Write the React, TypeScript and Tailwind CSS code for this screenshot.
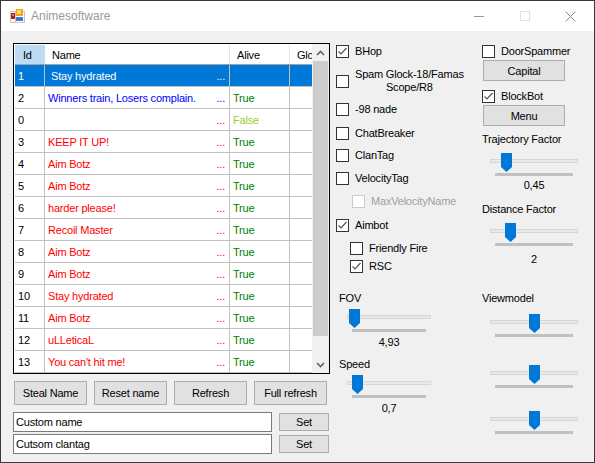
import React from 'react'

const rows = [
  { id: '1', name: 'Stay hydrated', alive: '', color: 'text-white', aliveColor: '', dots: 'text-white' },
  { id: '2', name: 'Winners train, Losers complain.', alive: 'True', color: 'text-[#0000ff]', aliveColor: 'text-[#008000]', dots: 'text-[#0000ff]' },
  { id: '0', name: '', alive: 'False', color: 'text-[#ff0000]', aliveColor: 'text-[#9acd32]', dots: 'text-[#ff0000]' },
  { id: '3', name: 'KEEP IT UP!', alive: 'True', color: 'text-[#ff0000]', aliveColor: 'text-[#008000]', dots: 'text-[#ff0000]' },
  { id: '4', name: 'Aim Botz', alive: 'True', color: 'text-[#ff0000]', aliveColor: 'text-[#008000]', dots: 'text-[#ff0000]' },
  { id: '5', name: 'Aim Botz', alive: 'True', color: 'text-[#ff0000]', aliveColor: 'text-[#008000]', dots: 'text-[#ff0000]' },
  { id: '6', name: 'harder please!', alive: 'True', color: 'text-[#ff0000]', aliveColor: 'text-[#008000]', dots: 'text-[#ff0000]' },
  { id: '7', name: 'Recoil Master', alive: 'True', color: 'text-[#ff0000]', aliveColor: 'text-[#008000]', dots: 'text-[#ff0000]' },
  { id: '8', name: 'Aim Botz', alive: 'True', color: 'text-[#ff0000]', aliveColor: 'text-[#008000]', dots: 'text-[#ff0000]' },
  { id: '9', name: 'Aim Botz', alive: 'True', color: 'text-[#ff0000]', aliveColor: 'text-[#008000]', dots: 'text-[#ff0000]' },
  { id: '10', name: 'Stay hydrated', alive: 'True', color: 'text-[#ff0000]', aliveColor: 'text-[#008000]', dots: 'text-[#ff0000]' },
  { id: '11', name: 'Aim Botz', alive: 'True', color: 'text-[#ff0000]', aliveColor: 'text-[#008000]', dots: 'text-[#ff0000]' },
  { id: '12', name: 'uLLeticaL', alive: 'True', color: 'text-[#ff0000]', aliveColor: 'text-[#008000]', dots: 'text-[#ff0000]' },
  { id: '13', name: "You can't hit me!", alive: 'True', color: 'text-[#ff0000]', aliveColor: 'text-[#008000]', dots: 'text-[#ff0000]' },
]

const AppIcon = () => (
  <svg width="16" height="16" viewBox="0 0 16 16" className="shrink-0">
    <path d="M0.5 3.5 H14.5 V14.5 H0.5 Z M5.5 3.5 V14.5" fill="#ffffff" stroke="#c4c4c4" strokeWidth="1" />
    <rect x="1" y="5" width="4" height="6" fill="#b81c1c" />
    <rect x="2" y="6" width="2" height="2" fill="#e87070" />
    <rect x="6" y="1" width="7" height="7" fill="#eaa818" />
    <rect x="7" y="2" width="4" height="4" fill="#ffd860" />
    <rect x="6" y="9" width="7" height="4" fill="#3c78d8" />
  </svg>
)

const Check = ({ label, checked, disabled, className = '' }: { label: React.ReactNode; checked?: boolean; disabled?: boolean; className?: string }) => (
  <div className={`flex items-center gap-[6px] whitespace-nowrap ${className}`}>
    <span className={`w-[13px] h-[13px] shrink-0 border bg-white flex items-center justify-center ${disabled ? 'border-[#cccccc]' : 'border-[#333333]'}`}>
      {checked && (
        <svg width="11" height="11" viewBox="0 0 11 11">
          <path d="M1.5 5.5 L4 8 L9.5 2" fill="none" stroke="#555555" strokeWidth="1.2" />
        </svg>
      )}
    </span>
    <span className={disabled ? 'text-[#a0a0a0]' : ''}>{label}</span>
  </div>
)

const Btn = ({ children, className = '' }: { children: React.ReactNode; className?: string }) => (
  <button className={`bg-[#e1e1e1] border border-[#adadad] flex items-center justify-center shrink-0 ${className}`}>{children}</button>
)

// thumb offset is measured from the left of the track
const Slider = ({ width, thumb, className = '' }: { width: number; thumb: number; className?: string }) => (
  <div className={`relative h-[24px] ${className}`} style={{ width }}>
    <div className="absolute left-0 right-0 top-[6px] h-[4px] bg-[#e7eae7] border border-[#d6d6d6]" />
    <svg width="11" height="19" viewBox="0 0 11 19" className="absolute top-0" style={{ left: thumb }}>
      <path d="M0 0 H11 V14 L5.5 19 L0 14 Z" fill="#0078d7" />
    </svg>
    <div className="absolute top-[20px] left-[5px] right-[5px] h-[3px] bg-[#c0c0c0]" />
  </div>
)

const App = () => (
  <div className="w-[595px] h-[463px] flex flex-col bg-[#f0f0f0] border border-[#3a3a3a] text-[11px] tracking-[-0.2px] text-[#000000] overflow-hidden font-['Liberation_Sans',sans-serif] leading-[16px]">
    <div className="h-[30px] shrink-0 bg-white flex items-center">
      <div className="flex items-center gap-[5px] pl-[9px] flex-1">
        <AppIcon />
        <span className="text-[#999999] text-[12px] tracking-normal">Animesoftware</span>
      </div>
      <div className="flex items-center text-[#999999]">
        <div className="w-[46px] flex justify-center"><div className="w-[10px] h-px bg-[#999999]" /></div>
        <div className="w-[46px] flex justify-center"><div className="w-[10px] h-[10px] border border-[#e0e0e0]" /></div>
        <div className="w-[46px] flex justify-center pr-[1px]">
          <svg width="11" height="11" viewBox="0 0 11 11"><path d="M0.5 0.5 L10.5 10.5 M10.5 0.5 L0.5 10.5" stroke="#888888" strokeWidth="1" /></svg>
        </div>
      </div>
    </div>

    <div className="flex flex-1">
      {/* grid + buttons */}
      <div className="w-[335px] shrink-0 pl-[12px] pt-[12px] flex flex-col">
        <div className="w-[317px] h-[331px] border border-black flex bg-white">
          <div className="flex-1 flex flex-col overflow-hidden pl-[1px] pt-[1px]">
            <div className="flex h-[20px] shrink-0 border-b border-[#a0a0a0]">
              <div className="w-[30px] bg-[#bcdcf4] pl-[8px] leading-[20px]">Id</div>
              <div className="w-[185px] pl-[7px] leading-[20px] border-r border-[#e5e5e5]">Name</div>
              <div className="w-[60px] pl-[7px] leading-[20px] border-r border-[#e5e5e5]">Alive</div>
              <div className="w-[22px] pl-[7px] leading-[20px] overflow-hidden whitespace-nowrap">Glow</div>
            </div>
            {rows.map((r, i) => (
              <div key={r.id} className={`flex h-[22px] shrink-0 border-b border-[#c0c0c0] leading-[23px] ${i === 0 ? 'bg-[#0078d7]' : ''}`}>
                <div className={`w-[30px] pl-[3px] border-r border-[#c0c0c0] ${i === 0 ? 'text-white' : ''}`}>{r.id}</div>
                <div className={`w-[185px] flex justify-between pr-[4px] border-r border-[#c0c0c0] whitespace-nowrap ${i === 0 ? 'pl-[6px]' : 'pl-[3px]'}`}>
                  <span className={r.color}>{r.name}</span>
                  <span className={r.dots}>...</span>
                </div>
                <div className={`w-[60px] pl-[3px] border-r border-[#c0c0c0] ${r.aliveColor}`}>{r.alive}</div>
                <div className="w-[22px]" />
              </div>
            ))}
          </div>
          <div className="w-[17px] shrink-0 bg-[#f0f0f0] flex flex-col">
            <div className="h-[17px] flex items-center justify-center">
              <svg width="9" height="6" viewBox="0 0 9 6"><path d="M1 5 L4.5 1.5 L8 5" fill="none" stroke="#606060" strokeWidth="1.6" /></svg>
            </div>
            <div className="h-[275px] mx-[1px] bg-[#cdcdcd]" />
            <div className="flex-1" />
            <div className="h-[17px] flex items-center justify-center">
              <svg width="9" height="6" viewBox="0 0 9 6"><path d="M1 1 L4.5 4.5 L8 1" fill="none" stroke="#606060" strokeWidth="1.6" /></svg>
            </div>
          </div>
        </div>

        <div className="flex gap-[7px] pl-[1px] mt-[7px]">
          <Btn className="w-[73px] h-[24px]">Steal Name</Btn>
          <Btn className="w-[73px] h-[24px]">Reset name</Btn>
          <Btn className="w-[73px] h-[24px]">Refresh</Btn>
          <Btn className="w-[73px] h-[24px]">Full refresh</Btn>
        </div>

        <div className="flex items-center gap-[7px] mt-[7px]">
          <div className="w-[259px] h-[20px] bg-white border border-[#7a7a7a] pl-[2px] leading-[18px]">Custom name</div>
          <Btn className="w-[50px] h-[18px]">Set</Btn>
        </div>
        <div className="flex items-center gap-[7px] mt-[2px]">
          <div className="w-[259px] h-[20px] bg-white border border-[#7a7a7a] pl-[2px] leading-[18px]">Cutsom clantag</div>
          <Btn className="w-[50px] h-[18px]">Set</Btn>
        </div>
      </div>

      {/* middle options */}
      <div className="w-[146px] shrink-0 pt-[12px] flex flex-col">
        <Check checked label="BHop" />
        <Check className="mt-[9px]" label={<span className="block text-center leading-[13px]">Spam Glock-18/Famas<br />Scope/R8</span>} />
        <Check className="mt-[7px]" label="-98 nade" />
        <Check className="mt-[8px]" label="ChatBreaker" />
        <Check className="mt-[6px]" label="ClanTag" />
        <Check className="mt-[7px]" label="VelocityTag" />
        <Check className="mt-[7px] ml-[16px]" disabled label="MaxVelocityName" />
        <Check className="mt-[8px]" checked label="Aimbot" />
        <Check className="mt-[7px] ml-[14px]" label="Friendly Fire" />
        <Check className="mt-[2px] ml-[14px]" checked label="RSC" />
        <div className="mt-[16px] ml-[3px]">FOV</div>
        <Slider className="ml-[11px] mt-[3px]" width={84} thumb={2} />
        <div className="w-[84px] ml-[11px] mt-[1px] text-center">4,93</div>
        <div className="mt-[6px] ml-[3px]">Speed</div>
        <Slider className="ml-[11px] mt-[3px]" width={84} thumb={5} />
        <div className="w-[84px] ml-[11px] mt-[1px] text-center">0,7</div>
      </div>

      {/* right options */}
      <div className="flex-1 pt-[12px] flex flex-col">
        <Check label="DoorSpammer" />
        <Btn className="w-[82px] h-[21px] ml-[1px] mt-[1px]">Capital</Btn>
        <Check className="mt-[7px]" checked label="BlockBot" />
        <Btn className="w-[82px] h-[21px] ml-[1px] mt-[1px]">Menu</Btn>
        <div className="mt-[5px]">Trajectory Factor</div>
        <Slider className="ml-[8px] mt-[6px]" width={88} thumb={11} />
        <div className="w-[88px] ml-[8px] text-center">0,45</div>
        <div className="mt-[8px]">Distance Factor</div>
        <Slider className="ml-[8px] mt-[6px]" width={88} thumb={15} />
        <div className="w-[88px] ml-[8px] mt-[4px] text-center">2</div>
        <div className="mt-[23px]">Viewmodel</div>
        <Slider className="ml-[8px] mt-[8px]" width={88} thumb={39} />
        <Slider className="ml-[8px] mt-[27px]" width={88} thumb={39} />
        <Slider className="ml-[8px] mt-[22px]" width={88} thumb={39} />
      </div>
    </div>
  </div>
)

export default App
